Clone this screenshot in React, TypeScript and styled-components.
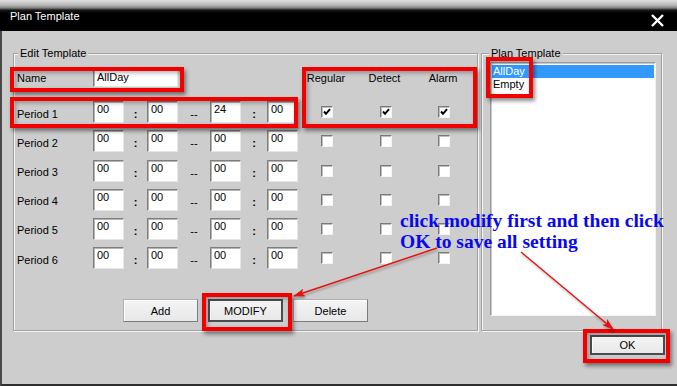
import styled, { createGlobalStyle } from "styled-components";

const GlobalStyle = createGlobalStyle`
  html, body {
    margin: 0;
    padding: 0;
    background: #cdcdcd;
  }
  body {
    font-family: "Liberation Sans", Arial, sans-serif;
    font-size: 11px;
    color: #000;
  }
`;

const Window = styled.div`
  position: relative;
  width: 677px;
  height: 386px;
  overflow: hidden;
  display: flex;
  flex-direction: column;
  background: #cdcdcd;
`;

const TitleBar = styled.div`
  flex: none;
  height: 31px;
  box-sizing: border-box;
  padding: 10px 13px 0 10px;
  display: flex;
  justify-content: space-between;
  align-items: flex-start;
  background: linear-gradient(
    to bottom,
    #dedede 0,
    #b8b8b8 5px,
    #808080 8px,
    #1a1a1a 10px,
    #000 13px,
    #000 31px
  );
`;

const Title = styled.span`
  color: #fff;
  line-height: 13px;
`;

const CloseIcon = styled.svg`
  width: 13px;
  height: 13px;
  margin-top: 4px;
`;

const Body = styled.div`
  flex: 1;
  display: flex;
  flex-direction: column;
  border-left: 2px solid #4a4a4a;
  border-bottom: 2px solid #2e2e2e;
  padding: 16px 0 0 11px;
`;

const Groups = styled.div`
  display: flex;
  align-items: stretch;
`;

const GroupBox = styled.fieldset`
  margin: 0;
  box-sizing: border-box;
  border: 1px solid #a2a2a2;
  box-shadow: inset 1px 1px 0 #f4f4f4, 1px 1px 0 #f4f4f4;
  min-width: 0;
`;

const EditGroup = styled(GroupBox)`
  width: 465px;
  padding: 9px 0 8px 3px;
`;

const PlanGroup = styled(GroupBox)`
  width: 181px;
  margin-left: 3px;
  padding: 2px 5px 13px 8px;
`;

const Legend = styled.legend<{ $shift?: number }>`
  padding: 0 2px;
  margin-left: ${(p) => p.$shift ?? 1}px;
  line-height: 13px;
  background: #cdcdcd;
`;

const TemplateGrid = styled.div`
  display: grid;
  grid-template-columns: 76px 31px 23px 31px 32px 31px 26px 31px 58px 59px 58px;
  grid-template-rows: 25px;
  grid-auto-rows: 22px;
  row-gap: 7.2px;
  align-items: center;
`;

const RowLabel = styled.span<{ $top?: boolean }>`
  align-self: ${(p) => (p.$top ? "start" : "center")};
  line-height: 18px;
  padding-top: ${(p) => (p.$top ? 0 : 3)}px;
`;

const ColumnHead = styled.span<{ $col: number }>`
  grid-column: ${(p) => p.$col};
  align-self: start;
  line-height: 18px;
  text-align: center;
  padding-right: 2px;
`;

const Field = styled.input`
  box-sizing: border-box;
  width: 100%;
  margin: 0;
  font-family: "Liberation Sans", Arial, sans-serif;
  font-size: 11px;
  color: #000;
  background: #fff;
  border-style: solid;
  border-width: 1px;
  border-color: #7e7e7e #e6e6e6 #e6e6e6 #7e7e7e;
  box-shadow: inset 1px 1px 0 #b4b4b4;
  outline: none;
`;

const NameField = styled(Field)`
  grid-column: 2 / span 3;
  align-self: start;
  height: 18px;
  padding: 0 0 2px 3px;
`;

const TimeField = styled(Field)`
  height: 22px;
  padding: 0 0 6px 3px;
`;

const Sep = styled.span<{ $bold?: boolean }>`
  text-align: center;
  padding-top: 4px;
  font-weight: ${(p) => (p.$bold ? 700 : 400)};
`;

const CheckCell = styled.span`
  justify-self: center;
  width: 12px;
  height: 12px;
  box-sizing: border-box;
  background: #fff;
  border-style: solid;
  border-width: 1px;
  border-color: #7a7a7a #f4f4f4 #f4f4f4 #7a7a7a;
  box-shadow: inset 1px 1px 0 #bdbdbd;
  display: flex;
  align-items: center;
  justify-content: center;
`;

const ButtonRow = styled.div`
  display: flex;
  gap: 10px;
  margin-top: 30px;
  padding-left: 106px;
`;

const PushButton = styled.button<{ $isDefault?: boolean }>`
  width: 75px;
  height: 23px;
  box-sizing: border-box;
  margin: 0;
  padding: 0;
  font-family: "Liberation Sans", Arial, sans-serif;
  font-size: 11px;
  color: #000;
  background: linear-gradient(to bottom, #f4f4f4, #e8e8e8);
  border-style: solid;
  border-width: ${(p) => (p.$isDefault ? 2 : 1)}px;
  border-color: ${(p) =>
    p.$isDefault ? "#4c4c4c" : "#b0b0b0 #7c7c7c #7c7c7c #b0b0b0"};
  box-shadow: inset 1px 1px 0 #fff;
  cursor: pointer;
`;

const ListBox = styled.div`
  height: 254px;
  box-sizing: border-box;
  background: #fff;
  border-style: solid;
  border-width: 1px;
  border-color: #9a9a9a #f2f2f2 #f2f2f2 #9a9a9a;
  box-shadow: inset 1px 1px 0 #c8c8c8;
  padding: 2px 1px;
`;

const ListItem = styled.div<{ $selected?: boolean }>`
  line-height: 13px;
  padding-left: 1px;
  color: ${(p) => (p.$selected ? "#fff" : "#000")};
  background: ${(p) => (p.$selected ? "#3399ff" : "transparent")};
`;

const Footer = styled.div`
  display: flex;
  justify-content: flex-end;
  padding: 4px 12px 0 0;
`;

const OkButton = styled(PushButton)`
  width: 75px;
  height: 20px;
`;

const Highlight = styled.div<{ $x: number; $y: number; $w: number; $h: number }>`
  position: absolute;
  left: ${(p) => p.$x}px;
  top: ${(p) => p.$y}px;
  width: ${(p) => p.$w}px;
  height: ${(p) => p.$h}px;
  box-sizing: border-box;
  border: 4px solid #f20000;
  box-shadow: 2px 3px 4px rgba(0, 0, 0, 0.45),
    inset 2px 2px 4px rgba(0, 0, 0, 0.3);
  pointer-events: none;
`;

const Arrows = styled.svg`
  position: absolute;
  left: 0;
  top: 0;
  width: 677px;
  height: 386px;
  pointer-events: none;
  filter: drop-shadow(1px 2px 1px rgba(0, 0, 0, 0.3));
`;

const Note = styled.div`
  position: absolute;
  left: 400px;
  top: 210px;
  font-family: "Liberation Serif", "Times New Roman", serif;
  font-weight: 700;
  font-size: 19.5px;
  line-height: 21px;
  color: #0808f0;
  white-space: nowrap;
  pointer-events: none;
`;

const periods = [
  { label: "Period 1", times: ["00", "00", "24", "00"], on: true },
  { label: "Period 2", times: ["00", "00", "00", "00"], on: false },
  { label: "Period 3", times: ["00", "00", "00", "00"], on: false },
  { label: "Period 4", times: ["00", "00", "00", "00"], on: false },
  { label: "Period 5", times: ["00", "00", "00", "00"], on: false },
  { label: "Period 6", times: ["00", "00", "00", "00"], on: false },
];

function Check({ on }: { on: boolean }) {
  return (
    <CheckCell>
      {on && (
        <svg width="8" height="8" viewBox="0 0 8 8">
          <path d="M1 3.5 L3 5.8 L7 1.2" fill="none" stroke="#000" strokeWidth="2" />
        </svg>
      )}
    </CheckCell>
  );
}

function PeriodRow({ label, times, on }: { label: string; times: string[]; on: boolean }) {
  return (
    <>
      <RowLabel>{label}</RowLabel>
      <TimeField readOnly defaultValue={times[0]} />
      <Sep $bold>:</Sep>
      <TimeField readOnly defaultValue={times[1]} />
      <Sep>--</Sep>
      <TimeField readOnly defaultValue={times[2]} />
      <Sep $bold>:</Sep>
      <TimeField readOnly defaultValue={times[3]} />
      <Check on={on} />
      <Check on={on} />
      <Check on={on} />
    </>
  );
}

export default function App() {
  return (
    <>
      <GlobalStyle />
      <Window>
        <TitleBar>
          <Title>Plan Template</Title>
          <CloseIcon viewBox="0 0 13 13">
            <path d="M1 1 L12 12 M12 1 L1 12" stroke="#fff" strokeWidth="2.4" />
          </CloseIcon>
        </TitleBar>
        <Body>
          <Groups>
            <EditGroup>
              <Legend>Edit Template</Legend>
              <TemplateGrid>
                <RowLabel $top>Name</RowLabel>
                <NameField readOnly defaultValue="AllDay" />
                <ColumnHead $col={9}>Regular</ColumnHead>
                <ColumnHead $col={10}>Detect</ColumnHead>
                <ColumnHead $col={11}>Alarm</ColumnHead>
                {periods.map((row) => (
                  <PeriodRow key={row.label} {...row} />
                ))}
              </TemplateGrid>
              <ButtonRow>
                <PushButton>Add</PushButton>
                <PushButton $isDefault>MODIFY</PushButton>
                <PushButton>Delete</PushButton>
              </ButtonRow>
            </EditGroup>
            <PlanGroup>
              <Legend $shift={-1}>Plan Template</Legend>
              <ListBox>
                <ListItem $selected>AllDay</ListItem>
                <ListItem>Empty</ListItem>
              </ListBox>
            </PlanGroup>
          </Groups>
          <Footer>
            <OkButton $isDefault>OK</OkButton>
          </Footer>
        </Body>

        <Highlight $x={10} $y={67} $w={174} $h={25} />
        <Highlight $x={10} $y={97} $w={288} $h={31} />
        <Highlight $x={302} $y={67} $w={175} $h={61} />
        <Highlight $x={486} $y={57} $w={47} $h={41} />
        <Highlight $x={202} $y={293} $w={90} $h={38} />
        <Highlight $x={583} $y={329} $w={87} $h={34} />

        <Note>
          click modify first and then click
          <br />
          OK to save all setting
        </Note>

        <Arrows viewBox="0 0 677 386">
          <defs>
            <marker
              id="head"
              viewBox="0 0 12 8"
              refX="11"
              refY="4"
              markerWidth="12"
              markerHeight="8"
              markerUnits="userSpaceOnUse"
              orient="auto"
            >
              <path d="M0 0 L12 4 L0 8 L3 4 Z" fill="#e81010" />
            </marker>
          </defs>
          <line x1="437" y1="248" x2="294" y2="296" stroke="#e81010" strokeWidth="1.4" markerEnd="url(#head)" />
          <line x1="521" y1="252" x2="613" y2="329" stroke="#e81010" strokeWidth="1.4" markerEnd="url(#head)" />
        </Arrows>
      </Window>
    </>
  );
}
